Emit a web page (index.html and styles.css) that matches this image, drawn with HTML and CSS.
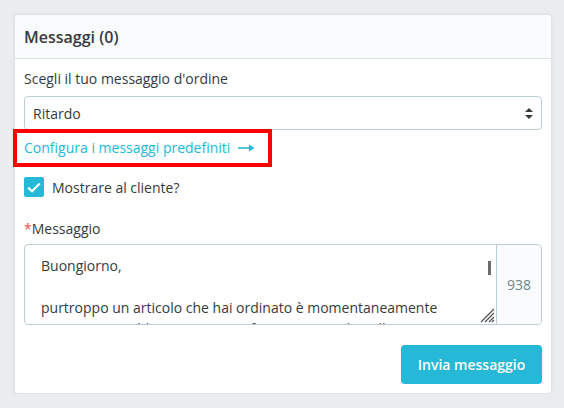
FILE: index.html
```html
<!DOCTYPE html>
<html lang="it">
<head>
<meta charset="utf-8">
<link rel="stylesheet" href="styles.css">
</head>
<body>
<div class="card">
  <div class="card-header">Messaggi (0)</div>
  <div class="card-body">
    <div class="label">Scegli il tuo messaggio d'ordine</div>
    <div class="select">
      <span>Ritardo</span>
      <svg class="caret" width="8" height="11" viewBox="0 0 8 11"><path d="M4 0 L8 4 L0 4 Z M0 7 L8 7 L4 11 Z" fill="#363a41"/></svg>
    </div>
    <div class="link-row">
      <span class="link">Configura i messaggi predefiniti</span>
      <svg class="arrow" width="17" height="8" viewBox="0 0 17 8"><path d="M0 4 H14" stroke="#25b9d7" stroke-width="1.6"/><path d="M11 0.5 L16.5 4 L11 7.5 Z" fill="#25b9d7"/></svg>
      <div class="highlight"></div>
    </div>
    <div class="check-row">
      <span class="checkbox"><svg width="14" height="11" viewBox="0 0 14 11"><path d="M1.2 5.6 L5 9.3 L12.8 1.4" fill="none" stroke="#fff" stroke-width="2.2"/></svg></span>
      <span>Mostrare al cliente?</span>
    </div>
    <div class="label msg-label"><span class="req">*</span>Messaggio</div>
    <div class="textarea-group">
      <div class="textarea">
        <p>Buongiorno,</p>
        <p>&nbsp;</p>
        <p>purtroppo un articolo che hai ordinato è momentaneamente esaurito. Potrebbe pertanto verificarsi un ritardo nella consegna.</p>
        <div class="scroll-thumb"></div>
        <svg class="grip" width="16" height="16" viewBox="0 0 16 16"><path d="M15 2 L2 15 M15 6 L6 15 M15 10 L10 15 M15 13 L13 15" stroke="#555" stroke-width="1.3"/></svg>
      </div>
      <div class="counter">938</div>
    </div>
    <div class="actions">
      <button class="btn">Invia messaggio</button>
    </div>
  </div>
</div>
</body>
</html>
```
FILE: styles.css
```css
* { box-sizing: border-box; }
body {
  margin: 0;
  background: #eaecee;
  font-family: "Open Sans", "Noto Sans", sans-serif;
  color: #363a41;
  font-size: 14px;
}
.card {
  margin: 14px 0 0 14px;
  width: 538px;
  height: 380px;
  background: #fff;
  border: 1px solid #dfe3e6;
  border-radius: 4px;
  box-shadow: 0 0 4px rgba(0,0,0,0.06);
}
.card-header {
  height: 44px;
  display: flex;
  align-items: center;
  padding: 0 9px;
  background: #fafbfc;
  border-bottom: 1px solid #dbe4e7;
  border-radius: 4px 4px 0 0;
  font-size: 16px;
  font-weight: 600;
}
.card-body {
  padding: 10px 9px 0;
  display: flex;
  flex-direction: column;
}
.label {
  line-height: 20px;
  height: 20px;
  margin-bottom: 7px;
}
.select {
  height: 34px;
  border: 1px solid #bbcdd2;
  border-radius: 4px;
  display: flex;
  align-items: center;
  justify-content: space-between;
  padding: 0 8px 0 8px;
}
.link-row {
  position: relative;
  height: 34px;
  display: flex;
  align-items: center;
  color: #25b9d7;
}
.arrow { margin-left: 8px; margin-top: 1px; }
.highlight {
  position: absolute;
  left: -11px;
  top: -1px;
  width: 259px;
  height: 38px;
  border: 4px solid #ff0000;
}
.check-row {
  margin-top: 13px;
  height: 20px;
  display: flex;
  align-items: center;
  gap: 8px;
}
.checkbox {
  width: 20px;
  height: 20px;
  background: #25b9d7;
  border-radius: 2px;
  display: flex;
  align-items: center;
  justify-content: center;
}
.msg-label { margin-top: 22px; margin-bottom: 5px; }
.req { color: #f54c3e; }
.textarea-group {
  height: 81px;
  display: flex;
  border: 1px solid #bbcdd2;
  border-radius: 4px;
  overflow: hidden;
}
.textarea {
  position: relative;
  flex: 1;
  padding: 10px 24px 0 16px;
  overflow: hidden;
  line-height: 21px;
}
.textarea p { margin: 0; }
.scroll-thumb {
  position: absolute;
  right: 5px;
  top: 16px;
  width: 3px;
  height: 14px;
  background: #6b6b6b;
}
.grip {
  position: absolute;
  right: 1px;
  bottom: 1px;
}
.counter {
  width: 45px;
  background: #fafbfc;
  border-left: 1px solid #bbcdd2;
  display: flex;
  align-items: center;
  justify-content: center;
  color: #6c868e;
}
.actions {
  display: flex;
  justify-content: flex-end;
  margin-top: 20px;
}
.btn {
  width: 141px;
  height: 39px;
  background: #25b9d7;
  color: #fff;
  border: none;
  border-radius: 4px;
  font-family: "Open Sans", "Noto Sans", sans-serif;
  font-size: 14px;
  font-weight: 600;
}
```
